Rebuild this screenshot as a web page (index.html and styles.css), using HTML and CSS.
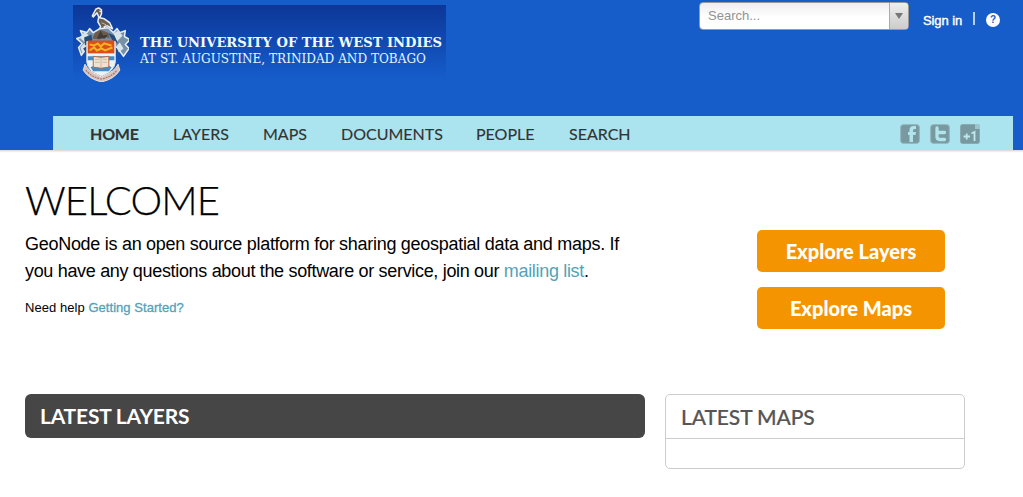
FILE: index.html
```html
<!DOCTYPE html>
<html lang="en">
<head>
<meta charset="utf-8">
<title>Welcome</title>
<link rel="stylesheet" href="styles.css">
</head>
<body>
<header class="header">
  <div class="top">
    <a class="brand">
      <svg class="crest" viewBox="0 0 60 80" preserveAspectRatio="none" aria-hidden="true">
        <g stroke="#e9eef2" stroke-width="1.6" stroke-linejoin="round">
          <path fill="#685e54" d="M27 28l2-4-3-5 1-5-2-4-4 4-1-1 4-7 3-1 3 2v4l-2 4 5 1 6 4 3 6-6-3-3 1 1 5z"/>
          <path fill="#7590a8" d="M16 43l-8 10-3-8 4-4-6-5 7-2-3-6 7 2 3-4 4 4 7-4 9-1 6 5 4-4 3 4 6-2-1 6 6 3-5 5 4 4-6 8-7-9z"/>
        </g>
        <path fill="#d8e3ea" d="M6 35l6-6 5 5-4 7zM43 31l5-3 5 5-6 6zM7 45l5-5 2 6-5 5zM46 44l4-4 4 6-5 4z"/>
        <path fill="#254d79" d="M11 35l8-3 1 6-8 5zM37 30l7 3 4 8-6-3zM10 46l5-3 1 12zM44 43l4 5-5 9z"/>
        <path fill="#6c5b4c" d="M20 36l3-6 6-3 8 3 2 6-6-2-5 3z"/>
        <path fill="#443b37" d="M25 36l4-8 3 5 5-1-3 4z"/>
        <path fill="#e9f4fa" stroke="#f3ead7" d="M14 39h31v21q-1 9-15 14-15-5-16-14z"/>
        <path fill="#dc4e19" d="M15 38h29v13H15z"/>
        <path fill="none" stroke="#efb328" stroke-width="2.2" d="M17 42l5 1 4-2 3 3 4-3 8 2M17 48l5-3 3 3 5-2 4 2 8-3"/>
        <path fill="#4589c5" d="M15 54h29v4H15zM18 65l5-2h14l4 2-3 4H21z"/>
        <path fill="#eee3cf" stroke="#b6623f" d="M21 54l8.500 1 8.500-1v11l-8.500 1-8.500-1z"/>
        <path fill="none" stroke="#bba48c" stroke-width=".7" d="M29.500 55v10M23 57h5m3 0h5M23 60h5m3 0h5"/>
        <path fill="#d8c3bd" stroke="#eee5e0" d="M12 62q3 7 18 13 15-6 18-13l2 6q-6 9-20 12-14-3-20-12z"/>
        <path fill="none" stroke="#a76f68" stroke-width="1.2" stroke-dasharray="2 1" d="M13 68q6 7 17 9 11-2 17-9"/>
        <circle cx="28.5" cy="8.5" r=".8" fill="#fff"/>
        <path fill="none" stroke="#c9bcae" d="M30 20l5 2 4 5"/>
      </svg>
      <svg class="brand-text" viewBox="0 0 306 75">
        <text class="brand-name" x="0" y="41.500" textLength="302" lengthAdjust="spacingAndGlyphs">THE UNIVERSITY OF THE WEST INDIES</text>
        <text class="brand-place" x="0" y="57.500" textLength="286" lengthAdjust="spacingAndGlyphs">AT ST. AUGUSTINE, TRINIDAD AND TOBAGO</text>
      </svg>
    </a>
    <div class="tools">
      <div class="search"><span class="search-label">Search...</span><span class="search-toggle"><i class="caret"></i></span></div>
      <a class="signin">Sign in</a>
      <span class="divider"></span>
      <span class="help">?</span>
    </div>
  </div>
  <nav class="nav">
    <a class="item active">HOME</a>
    <a class="item layers">LAYERS</a>
    <a class="item maps">MAPS</a>
    <a class="item documents">DOCUMENTS</a>
    <a class="item people">PEOPLE</a>
    <a class="item find">SEARCH</a>
    <div class="social">
      <svg viewBox="0 0 20 20"><rect x=".7" y=".7" width="18.600" height="18.600" rx="2.500" fill="#77999f" stroke="#91b4ba"/><path fill="#b1e4eb" d="M9.500 18v-7H8V8h1.500V6q0-4 4-4H16v3h-1.500q-1.500 0-1.500 1.500V8h3l-.5 3H13v7z"/></svg>
      <svg viewBox="0 0 20 20"><rect x=".7" y=".7" width="18.600" height="18.600" rx="2.500" fill="#77999f" stroke="#91b4ba"/><path fill="none" stroke="#b1e4eb" stroke-width="3.300" stroke-linecap="round" stroke-linejoin="round" d="M7 4v8.500q0 3 3 3h4.500M7 8.500h7.500"/></svg>
      <svg viewBox="0 0 20 20"><rect x=".5" y=".5" width="19" height="19" rx="2" fill="#77999f" stroke="#88aab0"/><path fill="#9dc4ca" d="M15 0h4l1 1v4h-5z"/><path fill="none" stroke="#c1e8ed" stroke-width="1.800" d="M3.500 12.500h6.500M6.700 9.500v6M11.500 9.500L14.500 8v9"/></svg>
    </div>
  </nav>
</header>
<main class="page">
  <section class="hero">
    <div class="intro">
      <h1 class="title">WELCOME</h1>
      <p class="lead"><span class="line line-one">GeoNode is an open source platform for sharing geospatial data and maps. If</span><span class="line line-two">you have any questions about the software or service, join our <a class="link">mailing list</a>.</span></p>
      <p class="started">Need help <a class="link strong">Getting Started?</a></p>
    </div>
    <div class="actions">
      <a class="button">Explore Layers</a>
      <a class="button">Explore Maps</a>
    </div>
  </section>
  <section class="latest">
    <h2 class="latest-layers">LATEST LAYERS</h2>
    <div class="latest-maps"><h2 class="maps-title">LATEST MAPS</h2></div>
  </section>
</main>
</body>
</html>
```

FILE: styles.css
```css
* { box-sizing: border-box; }
body { margin: 0; height: 497px; overflow: hidden; background: #fff; color: #000; font-family: "Liberation Sans", Arial, sans-serif; }
h1, h2, p { margin: 0; }
.header { height: 151px; background: #165dca; border-bottom: 1px solid #dedede; box-shadow: 0 1px 1px #eee; }
.top { height: 116px; padding-left: 73px; display: flex; justify-content: space-between; }
.brand { display: flex; width: 373px; height: 75px; margin-top: 5px; background: linear-gradient(#0c3797, #1149b1 48%, #155ac8 92%, #165dca); }
.crest { width: 55px; height: 79px; margin: -2px 0 0 1px; flex: none; }
.brand-text { width: 306px; height: 75px; flex: none; margin-left: 11px; overflow: visible; fill: #e3f4ff; font-family: "DejaVu Serif", serif; }
.brand-name { font-size: 13px; font-weight: bold; fill: #f2fbff; }
.brand-place { font-size: 12.5px; }
.tools { display: flex; width: 324px; padding-top: 2px; }
.search { display: flex; width: 210px; height: 28px; border: 1px solid #999; border-radius: 4px; background: linear-gradient(#eee, #fff 55%); overflow: hidden; }
.search-label { flex: 1; padding-left: 8px; font-size: 13px; line-height: 25px; color: #929292; }
.search-toggle { width: 19px; border-left: 1px solid #aaa; background: linear-gradient(#eee, #ccc); display: flex; align-items: center; justify-content: center; }
.caret { border: 4px solid transparent; border-top: 6px solid #777; border-bottom: 0; }
.signin { margin: 11px 0 0 14px; width: 50px; font-size: 13px; line-height: 15px; color: #fff; letter-spacing: -.1px; -webkit-text-stroke: .4px #fff; }
.divider { width: 2px; height: 13px; margin-top: 10px; background: #b9cff2; }
.help { width: 14px; height: 14px; margin: 11px 0 0 11px; border-radius: 50%; background: #fff; color: #165dca; font: bold 10px/14px "Liberation Sans", sans-serif; text-align: center; }
.nav { width: 960px; height: 34px; margin-left: 53px; padding-left: 37px; display: flex; background: #abe4ee; font: 16px/36px Lato, sans-serif; color: #333; }
.item { width: 83px; white-space: nowrap; -webkit-text-stroke: .15px #333; }
.active { font-weight: 700; letter-spacing: -.2px; }
.layers { width: 90px; }
.maps { width: 78px; }
.documents { width: 135px; }
.people { width: 93px; }
.find { width: 331px; }
.social { display: flex; gap: 10px; padding-top: 8px; }
.social svg { width: 20px; height: 20px; }
.page { padding: 0 58px 0 25px; }
.hero { height: 243px; display: flex; justify-content: space-between; }
.intro { width: 620px; padding-top: 24px; }
.title { font: 300 40px/50px Lato, sans-serif; letter-spacing: -.85px; -webkit-text-stroke: .25px #000; }
.lead { margin-top: 6px; font-size: 18px; line-height: 27px; }
.line { display: block; white-space: nowrap; }
.line-one { letter-spacing: -.285px; }
.line-two { letter-spacing: -.325px; }
.link { color: #52a3b8; }
.started { margin-top: 14px; font-size: 13px; line-height: 18px; letter-spacing: .05px; }
.strong { -webkit-text-stroke: .3px #52a3b8; }
.actions { width: 208px; padding: 79px 20px 0 0; display: flex; flex-direction: column; gap: 15px; }
.button { height: 42px; border-radius: 5px; background: #f49500; color: #fff; font: 900 20px/43px Lato, sans-serif; text-align: center; }
.latest { display: flex; gap: 20px; margin-right: -20px; align-items: flex-start; }
.latest-layers { width: 620px; height: 44px; padding-left: 15px; border-radius: 6px; background: #464646; color: #fff; font: 700 21px/44px Lato, sans-serif; letter-spacing: -.2px; }
.latest-maps { width: 300px; height: 75px; border: 1px solid #ccc; border-radius: 5px; }
.maps-title { height: 44px; padding-left: 15px; border-bottom: 1px solid #ccc; color: #555; font: 500 21px/44px Lato, sans-serif; letter-spacing: -.1px; -webkit-text-stroke: .2px #555; }
```
